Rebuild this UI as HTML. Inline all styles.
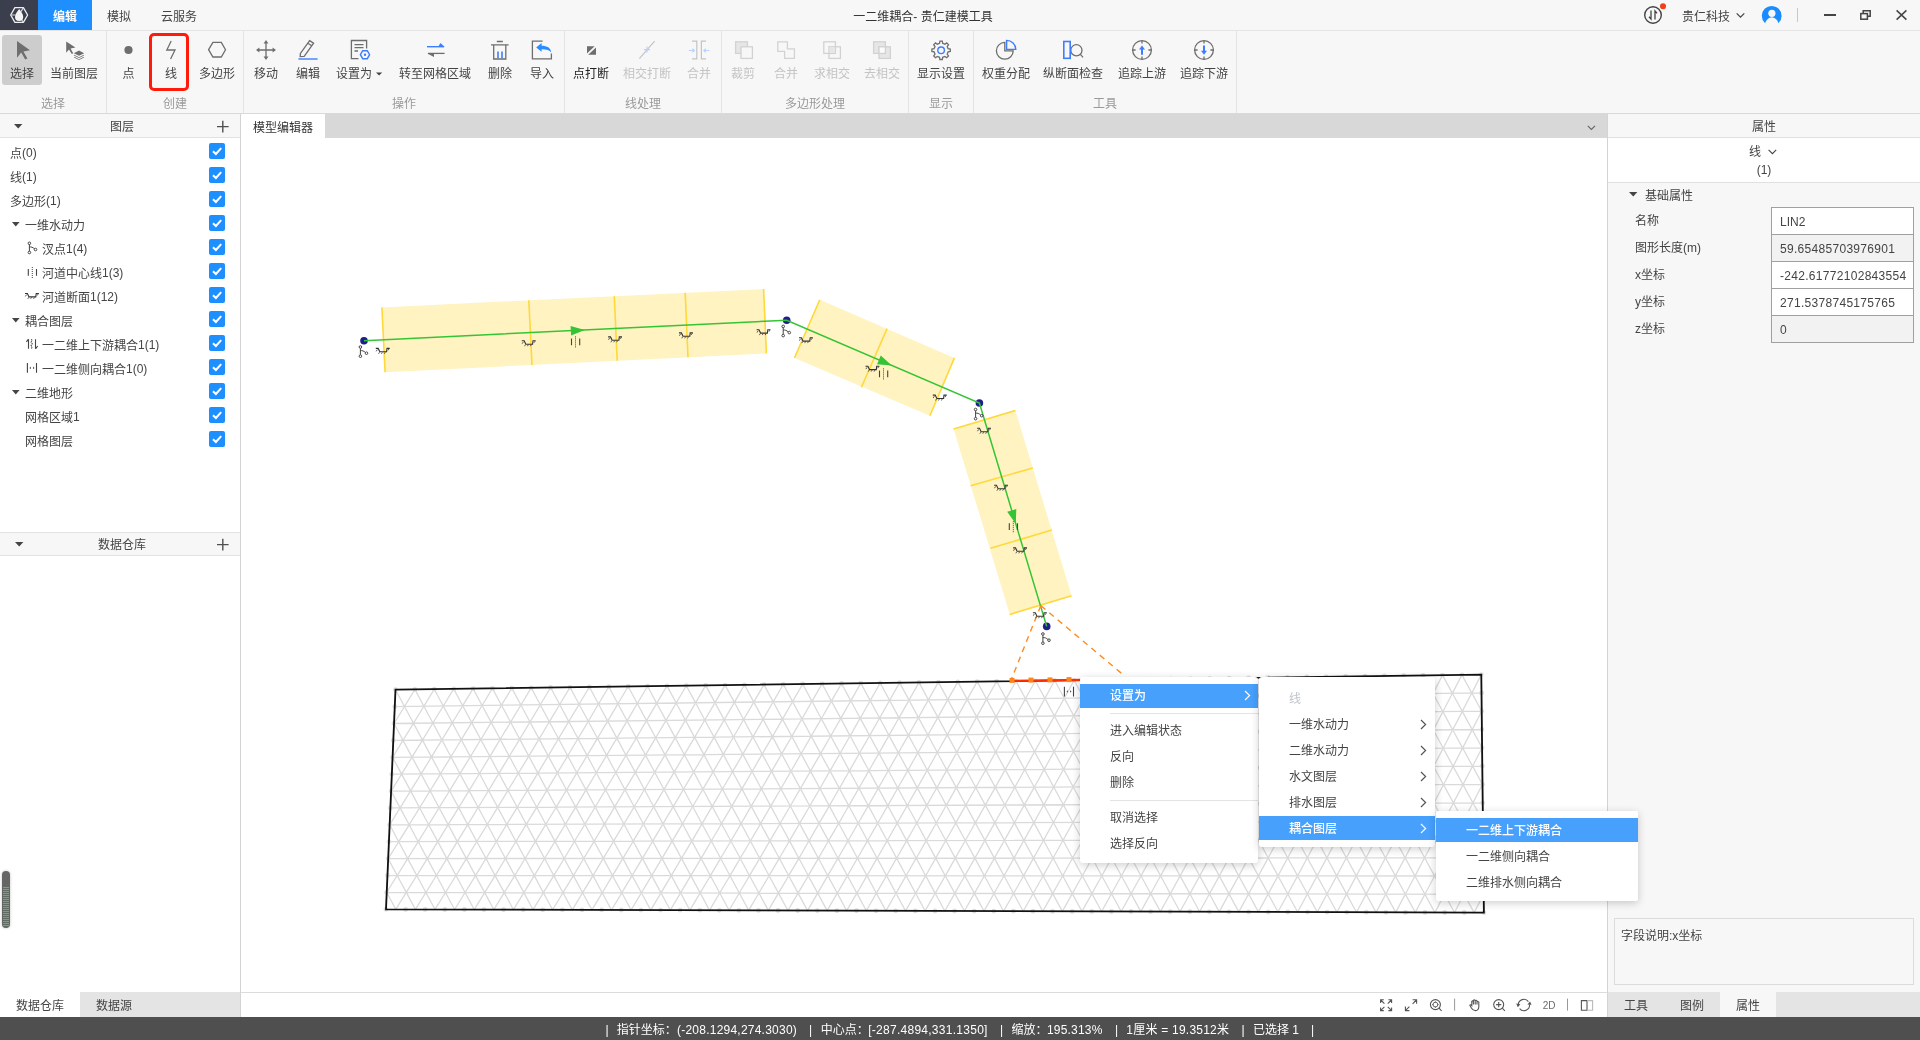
<!DOCTYPE html>
<html lang="zh-CN">
<head>
<meta charset="utf-8">
<title>一二维耦合- 贵仁建模工具</title>
<style>
*{box-sizing:border-box;margin:0;padding:0}
html,body{width:1920px;height:1040px;overflow:hidden;background:#fff}
body{font-family:"Liberation Sans","Noto Sans CJK SC",sans-serif;font-size:12px;color:#444;position:relative;line-height:1}
.abs{position:absolute}
.t{position:absolute;white-space:nowrap;line-height:16px;height:16px}
.c{transform:translateX(-50%)}
#top{position:absolute;left:0;top:0;width:1920px;height:30px;background:#f7f7f7}
#ribbon{position:absolute;left:0;top:30px;width:1920px;height:84px;background:#f7f7f7;border-top:1px solid #e2e2e2;border-bottom:1px solid #d9d9d9}
.sep{position:absolute;top:1px;width:1px;height:82px;background:#e4e4e4}
.gl{position:absolute;top:66.4px;color:#9a9a9a;white-space:nowrap;transform:translateX(-50%);line-height:16px}
.bl{position:absolute;top:36px;white-space:nowrap;transform:translateX(-50%);line-height:16px;color:#444}
.bl.dis{color:#c4c4c4}
.ic{position:absolute;overflow:visible}
svg{overflow:visible}
#left{position:absolute;left:0;top:114px;width:241px;height:903px;background:#fff;border-right:1px solid #d4d4d4}
.ph{position:absolute;left:0;width:240px;height:24px;background:#f7f7f7;border-bottom:1px solid #e2e2e2}
.row{position:absolute;left:0;width:240px;height:24px}
.row .t{top:6px}
.cb{position:absolute;left:209px;top:3px;width:16px;height:16px;background:#1e8fff;border-radius:2px}
#right{position:absolute;left:1607px;top:114px;width:313px;height:903px;background:#f7f7f7;border-left:1px solid #d4d4d4}
#status{position:absolute;left:0;top:1017px;width:1920px;height:23px;background:#4f4f4f;color:#fff}
.menu{position:absolute;background:#fff;box-shadow:0 2px 9px rgba(0,0,0,.2);border-radius:2px}
.mi{position:absolute;left:0;height:26px;line-height:26px;white-space:nowrap;color:#444}
.mi.sel{background:#46a0fc;color:#fff}
#wrap{position:absolute;left:0;top:0;width:1920px;height:1040px;will-change:transform}
.l{position:relative;top:-1px}
</style>
</head>
<body>
<div id="wrap">
<svg width="0" height="0" style="position:absolute">
  <defs>
    <g id="i-node" fill="none" stroke="#444" stroke-width="1">
      <circle cx="4.4" cy="1.3" r="1.3"/><circle cx="4.4" cy="10.5" r="1.3"/><circle cx="10.5" cy="7.5" r="1.3"/>
      <path d="M4.4 2.6 V9.2 M4.4 5 C6 4.6 8 5.4 9.4 6.8"/>
    </g>
    <g id="i-cl" fill="none" stroke="#444" stroke-width="1.1">
      <path d="M3.3 3 V9.8 M11.5 3 V9.8"/><path d="M7.3 1 V12" stroke-dasharray="1 1" stroke-width="1"/>
    </g>
    <g id="i-xs" fill="none" stroke="#333" stroke-width="1.1">
      <path d="M0 3.5 H2.4 L4 6.9 H10.8 L11.2 3.5 H13.9"/><path d="M1.5 4.6 L0.4 6.4 M3.6 7.4 L2.8 8.9 M6.5 7.4 L5.7 8.9 M9.4 7.4 L8.6 8.9 M13.2 3.9 L12.3 5.5" stroke-width=".8"/>
    </g>
    <g id="i-ud" fill="none" stroke="#444" stroke-width="1.1">
      <path d="M3.5 1.2 V10.8 M3.5 1.2 L1.4 3.8 M10.5 1.2 V10.8 M10.5 10.8 L12.7 8"/>
      <path d="M6.3 1.2 L7.2 2.6 L6.1 4.2 L7.2 5.8 L6.1 7.4 L7.2 9 L6.3 10.8" stroke-dasharray="1.6 .8"/>
    </g>
    <g id="i-lat" stroke="#444" stroke-width="1.1" fill="none">
      <path d="M2.4 1.1 V10.8 M11.5 1.1 V10.8"/><path d="M4.4 5.9 L5.9 4.6 V7.2 Z M9.5 5.9 L8 4.6 V7.2 Z" fill="#555" stroke="none"/>
    </g>
  </defs>
</svg>
<div id="top">
  <div class="abs" style="left:0;top:0;width:38px;height:30px;background:#3b3e4d">
    <svg class="abs" style="left:0;top:0" width="38" height="30" viewBox="0 0 38 30">
      <path d="M10.7 15 L14.9 7.6 H23.4 L27.6 15 L23.4 22.4 H14.9 Z" fill="none" stroke="#efefef" stroke-width="1.3" stroke-linejoin="round"/>
      <path d="M10.7 15 H15.4 M23.4 7.6 L21 11.6 M23.4 22.4 L21.4 19.4" stroke="#d8d8dc" stroke-width="1.1" fill="none"/>
      <path d="M19.2 9 C20.8 11.4 23.2 13.9 23.2 16.9 A4.1 4.1 0 0 1 15 16.9 C15 13.9 17.6 11.4 19.2 9 Z" fill="#f4f4f4"/>
    </svg>
  </div>
  <div class="abs" style="left:38px;top:0;width:54px;height:30px;background:#1e8fff"></div>
  <div class="t c" style="left:65px;top:8.6px;color:#fff;font-weight:bold">编辑</div>
  <div class="t c" style="left:119px;top:8.6px">模拟</div>
  <div class="t c" style="left:179px;top:8.6px">云服务</div>
  <div class="t c" style="left:923px;top:8.6px;color:#333">一二维耦合- 贵仁建模工具</div>
  <svg class="abs" style="left:1642px;top:0" width="30" height="30" viewBox="0 0 30 30">
    <circle cx="11" cy="15" r="8.3" fill="none" stroke="#444" stroke-width="1.4"/>
    <path d="M9 10.5 V19 L7 16.8 M13 19.5 V11 L15 13.2" fill="none" stroke="#444" stroke-width="1.3"/>
    <circle cx="21" cy="6.3" r="3" fill="#f0401a"/>
  </svg>
  <div class="t" style="left:1682px;top:8.6px;color:#444">贵仁科技</div>
  <svg class="abs" style="left:1736px;top:12px" width="9" height="7" viewBox="0 0 9 7"><path d="M0.7 1.3 L4.5 5.2 L8.3 1.3" fill="none" stroke="#444" stroke-width="1.2"/></svg>
  <svg class="abs" style="left:1760px;top:4px" width="24" height="24" viewBox="1760 4 24 24">
    <defs><clipPath id="avc"><circle cx="1771.7" cy="15.8" r="9.9"/></clipPath></defs>
    <circle cx="1771.7" cy="15.8" r="9.9" fill="#1a8cff"/>
    <g clip-path="url(#avc)"><ellipse cx="1771.8" cy="27.6" rx="7.4" ry="10.4" fill="#f7f7f7"/></g>
    <circle cx="1771.9" cy="13.3" r="3.6" fill="#f7f7f7"/>
    <rect x="1760" y="23.2" width="24" height="5" fill="#f7f7f7"/>
  </svg>
  <div class="abs" style="left:1797px;top:8px;width:1px;height:14px;background:#c8c8c8"></div>
  <div class="abs" style="left:1824px;top:14px;width:12px;height:2px;background:#444"></div>
  <svg class="abs" style="left:1860px;top:10px" width="11" height="10" viewBox="0 0 11 10"><path d="M3.2 3.2 V0.8 H10.2 V6.2 H7.5" fill="none" stroke="#444" stroke-width="1.5"/><rect x="0.8" y="3.6" width="6.6" height="5.6" fill="none" stroke="#444" stroke-width="1.5"/></svg>
  <svg class="abs" style="left:1896px;top:10px" width="11" height="10" viewBox="0 0 11 10"><path d="M0.6 0.4 L10.4 9.6 M10.4 0.4 L0.6 9.6" fill="none" stroke="#444" stroke-width="1.5"/></svg>
</div>
<div id="ribbon" style="border:none">
  <div class="abs" style="left:0;top:0;width:1920px;height:1px;background:#e4e4e4"></div>
  <div class="abs" style="left:0;top:83px;width:1920px;height:1px;background:#d9d9d9"></div>
  <div class="sep" style="left:106px"></div><div class="sep" style="left:243px"></div><div class="sep" style="left:564px"></div>
  <div class="sep" style="left:721px"></div><div class="sep" style="left:908px"></div><div class="sep" style="left:973px"></div><div class="sep" style="left:1236px"></div>
  <div class="abs" style="left:2px;top:5px;width:40px;height:50px;background:#cdcdcd;border-radius:3px"></div>
  <div class="abs" style="left:149px;top:3px;width:40px;height:58px;border:3px solid #ff1a0a;border-radius:5px"></div>

  <div class="bl" style="left:22px">选择</div>
  <div class="bl" style="left:74px">当前图层</div>
  <div class="bl" style="left:128.5px">点</div>
  <div class="bl" style="left:171px">线</div>
  <div class="bl" style="left:217px">多边形</div>
  <div class="bl" style="left:266px">移动</div>
  <div class="bl" style="left:308px">编辑</div>
  <div class="bl" style="left:354px">设置为</div>
  <div class="bl" style="left:435px">转至网格区域</div>
  <div class="bl" style="left:500px">删除</div>
  <div class="bl" style="left:542px">导入</div>
  <div class="bl" style="left:591px;color:#222">点打断</div>
  <div class="bl dis" style="left:647px">相交打断</div>
  <div class="bl dis" style="left:699px">合并</div>
  <div class="bl dis" style="left:743px">裁剪</div>
  <div class="bl dis" style="left:786px">合并</div>
  <div class="bl dis" style="left:832px">求相交</div>
  <div class="bl dis" style="left:882px">去相交</div>
  <div class="bl" style="left:941px">显示设置</div>
  <div class="bl" style="left:1006px">权重分配</div>
  <div class="bl" style="left:1073px">纵断面检查</div>
  <div class="bl" style="left:1142px">追踪上游</div>
  <div class="bl" style="left:1204px">追踪下游</div>

  <div class="gl" style="left:53px">选择</div>
  <div class="gl" style="left:175px">创建</div>
  <div class="gl" style="left:404px">操作</div>
  <div class="gl" style="left:643px">线处理</div>
  <div class="gl" style="left:815px">多边形处理</div>
  <div class="gl" style="left:941px">显示</div>
  <div class="gl" style="left:1105px">工具</div>

  <svg class="abs" style="left:0;top:0" width="1920" height="84" viewBox="0 30 1920 84">
    <g fill="#6e6e6e" stroke="none">
      <!-- select arrow -->
      <path d="M17 41 L17 57.8 L21.2 52.6 L25.2 59.6 L27.4 58.4 L23.4 51.4 L30 50.2 Z"/>
      <!-- current layer arrow -->
      <path d="M66.2 41.4 L66.2 52.8 L69 49.5 L71.8 54 L73.2 53.2 L70.6 48.6 L75.4 47.6 Z"/>
      <path d="M79 50.6 L84.2 53.2 L79 55.8 L73.8 53.2 Z"/>
      <path d="M74.6 55 L79 57.2 L83.4 55 L84.2 55.5 L79 58.1 L73.8 55.5 Z"/>
      <path d="M74.6 57 L79 59.2 L83.4 57 L84.2 57.5 L79 60.1 L73.8 57.5 Z"/>
      <!-- point -->
      <circle cx="128.5" cy="50" r="4.1"/>
      <!-- break at point -->
      <path d="M587 46.2 H594.6 L587 53.4 Z M596 47.4 V54.8 H588.2 Z"/>
    </g>
    <g fill="none" stroke="#6e6e6e" stroke-width="1.3">
      <!-- line -->
      <path d="M171.2 41 L166.8 50 H175 L170.6 59"/>
      <!-- polygon -->
      <path d="M208.6 49.7 L212.9 42.4 H221.3 L225.5 49.7 L221.3 57 H212.9 Z"/>
      <!-- move -->
      <path d="M266 42 V58 M258 50 H274"/>
      <!-- pencil -->
      <path d="M309.6 40.6 L313.6 43.2 L304.2 56.4 L300.2 56.6 L300.4 53.4 Z M307.8 43.2 L311.8 45.8"/>
      <!-- doc -->
      <path d="M358.5 58.6 H351.4 V40.5 H366.6 V48.5"/>
      <path d="M354.5 44.6 H363.5 M354.5 47.6 H363.5 M354.5 51 H358"/>
      <!-- swap gray -->
      <path d="M444.6 53.4 H428"/>
      <!-- trash -->
      <path d="M496.8 41.5 H502.8 M491 44.8 H508.6 M493.7 45 V59 H505.8 V45"/>
      <!-- import -->
      <path d="M542.6 41.2 H532.4 V58.8 H551.4 V53.6"/>
      <!-- gear -->
      <path d="M939.9 41.1 L942.3 41.1 L942.7 43.3 L944.9 44.2 L946.7 42.9 L948.5 44.7 L947.2 46.5 L948.1 48.7 L950.3 49.1 L950.3 51.5 L948.1 51.9 L947.2 54.1 L948.5 55.9 L946.7 57.7 L944.9 56.4 L942.7 57.3 L942.3 59.5 L939.9 59.5 L939.5 57.3 L937.3 56.4 L935.5 57.7 L933.7 55.9 L935.0 54.1 L934.1 51.9 L931.9 51.5 L931.9 49.1 L934.1 48.7 L935.0 46.5 L933.7 44.7 L935.5 42.9 L937.3 44.2 L939.5 43.3 Z"/>
      <!-- pie gray -->
      <path d="M1004.8 42.4 A8.4 8.4 0 1 0 1013.2 50.8 H1004.8 Z"/>
      <!-- magnifier -->
      <circle cx="1076.4" cy="50.3" r="5.6"/><path d="M1080.4 54.4 L1083 57.4"/>
      <!-- trace circles -->
      <circle cx="1142" cy="50" r="9.4"/><path d="M1142 40.6 V43.6 M1142 56.4 V59.4 M1132.6 50 H1135.6 M1148.4 50 H1151.4"/>
      <circle cx="1204" cy="50" r="9.4"/><path d="M1204 40.6 V43.6 M1204 56.4 V59.4 M1194.6 50 H1197.6 M1210.4 50 H1213.4"/>
    </g>
    <g fill="#6e6e6e">
      <path d="M266 40 L268.4 43.4 H263.6 Z M266 60 L268.4 56.6 H263.6 Z M256 50 L259.4 47.6 V52.4 Z M276 50 L272.6 47.6 V52.4 Z"/>
      <path d="M427.2 53.4 H434 V57 Z"/>
      <path d="M376 72.4 H382.2 L379.1 75.6 Z" fill="#444"/>
    </g>
    <g fill="none" stroke="#3d7eff" stroke-width="1.4">
      <path d="M298.4 59 H317.6"/>
      <path d="M360.4 54.7 L362.7 50.7 H367.3 L369.6 54.7 L367.3 58.7 H362.7 Z"/>
      <path d="M427 46.7 H444"/>
      <path d="M498 51.4 V58.2 M502 51.4 V58.2" stroke-width="1.6"/>
      <circle cx="941.1" cy="50.3" r="3.3"/>
      <path d="M1006.6 40.4 A9.2 9.2 0 0 1 1015.8 49.4 H1006.6 Z"/>
      <rect x="1063.8" y="41.5" width="6.4" height="16.8" stroke-width="1.6"/>
    </g>
    <g fill="#3d7eff">
      <circle cx="365" cy="54.7" r="1.2"/>
      <path d="M444.8 46.9 H438 L440.4 43 Z"/>
      <path d="M536.2 47.4 L541.6 43 V45.8 C547 45.8 550.8 47.8 551.2 52.4 C549.6 50 546.6 49.2 541.6 49.2 V51.8 Z" fill="#2b8cff"/>
      <path d="M1142 45.6 L1145 49.6 H1143 V54.8 H1141 V49.6 H1139 Z"/>
      <path d="M1204 54.8 L1207 50.8 H1205 V45.6 H1203 V50.8 H1201 Z"/>
    </g>
    <!-- disabled -->
    <g fill="none" stroke="#c4c4c4" stroke-width="1.2">
      <path d="M639.4 58.6 L654.6 41.2"/>
      <path d="M692 41.2 H696.8 V58.8 H692 M706 41.2 H701.4 V58.8 H706"/>
    </g>
    <g fill="none" stroke="#b9d1ff" stroke-width="1.2">
      <path d="M644 49.6 H650 M647 46.6 V52.6"/>
      <path d="M688.8 50.5 H694.4 M692.4 48.6 L694.4 50.5 L692.4 52.4"/>
      <path d="M709.4 50.5 H703.8 M705.8 48.6 L703.8 50.5 L705.8 52.4"/>
    </g>
    <g stroke="#d2d2d2" stroke-width="1.3">
      <rect x="735.6" y="41.8" width="11.8" height="11.6" fill="#e6e6e6"/>
      <rect x="741" y="46.8" width="11.4" height="11.6" fill="#f7f7f7"/>
      <path d="M777.8 41.8 H787.4 V48.8 H794.4 V58.4 H784.6 V51.4 H777.8 Z" fill="#f7f7f7"/>
      <rect x="823.8" y="41.8" width="11.6" height="11.6" fill="none"/>
      <rect x="829" y="46.8" width="11.4" height="11.6" fill="none"/>
      <rect x="829.6" y="47.4" width="5.2" height="5.4" fill="#e6e6e6" stroke="none"/>
      <rect x="873.6" y="41.8" width="11.8" height="11.6" fill="#e6e6e6"/>
      <rect x="879" y="46.8" width="11.4" height="11.6" fill="#e6e6e6"/>
      <rect x="879" y="46.8" width="6.4" height="6.6" fill="#fbfbfb"/>
    </g>
  </svg>
</div>
<div id="left">
<div class="ph" style="top:0"><svg class="abs" style="left:14px;top:10px" width="9" height="5"><path d="M0 0 H8.4 L4.2 4.6 Z" fill="#444"/></svg><div class="t c" style="left:122px;top:5px">图层</div><svg class="abs" style="left:216px;top:6px" width="13" height="13"><path d="M6.8 0.8 V12.4 M1 6.6 H12.6" stroke="#505050" stroke-width="1.4" fill="none"/></svg></div>
<div class="row" style="top:26px"><div class="t" style="left:10px">点<span class="l">(0)</span></div><div class="cb"><svg width="16" height="16" viewBox="0 0 16 16"><path d="M4 8.2 L6.9 11 L12.2 5.2" fill="none" stroke="#fff" stroke-width="2"/></svg></div></div>
<div class="row" style="top:50px"><div class="t" style="left:10px">线<span class="l">(1)</span></div><div class="cb"><svg width="16" height="16" viewBox="0 0 16 16"><path d="M4 8.2 L6.9 11 L12.2 5.2" fill="none" stroke="#fff" stroke-width="2"/></svg></div></div>
<div class="row" style="top:74px"><div class="t" style="left:10px">多边形<span class="l">(1)</span></div><div class="cb"><svg width="16" height="16" viewBox="0 0 16 16"><path d="M4 8.2 L6.9 11 L12.2 5.2" fill="none" stroke="#fff" stroke-width="2"/></svg></div></div>
<div class="row" style="top:98px"><svg class="abs" style="left:12px;top:10px" width="8" height="5"><path d="M0 0 H7.6 L3.8 4.4 Z" fill="#444"/></svg><div class="t" style="left:25px">一维水动力</div><div class="cb"><svg width="16" height="16" viewBox="0 0 16 16"><path d="M4 8.2 L6.9 11 L12.2 5.2" fill="none" stroke="#fff" stroke-width="2"/></svg></div></div>
<div class="row" style="top:122px"><svg class="abs" style="left:25px;top:6px" width="14" height="14" viewBox="0 0 14 14"><use href="#i-node"/></svg><div class="t" style="left:42px">汊点<span class="l">1(4)</span></div><div class="cb"><svg width="16" height="16" viewBox="0 0 16 16"><path d="M4 8.2 L6.9 11 L12.2 5.2" fill="none" stroke="#fff" stroke-width="2"/></svg></div></div>
<div class="row" style="top:146px"><svg class="abs" style="left:25px;top:6px" width="14" height="14" viewBox="0 0 14 14"><use href="#i-cl"/></svg><div class="t" style="left:42px">河道中心线<span class="l">1(3)</span></div><div class="cb"><svg width="16" height="16" viewBox="0 0 16 16"><path d="M4 8.2 L6.9 11 L12.2 5.2" fill="none" stroke="#fff" stroke-width="2"/></svg></div></div>
<div class="row" style="top:170px"><svg class="abs" style="left:25px;top:6px" width="14" height="14" viewBox="0 0 14 14"><use href="#i-xs"/></svg><div class="t" style="left:42px">河道断面<span class="l">1(12)</span></div><div class="cb"><svg width="16" height="16" viewBox="0 0 16 16"><path d="M4 8.2 L6.9 11 L12.2 5.2" fill="none" stroke="#fff" stroke-width="2"/></svg></div></div>
<div class="row" style="top:194px"><svg class="abs" style="left:12px;top:10px" width="8" height="5"><path d="M0 0 H7.6 L3.8 4.4 Z" fill="#444"/></svg><div class="t" style="left:25px">耦合图层</div><div class="cb"><svg width="16" height="16" viewBox="0 0 16 16"><path d="M4 8.2 L6.9 11 L12.2 5.2" fill="none" stroke="#fff" stroke-width="2"/></svg></div></div>
<div class="row" style="top:218px"><svg class="abs" style="left:25px;top:6px" width="14" height="14" viewBox="0 0 14 14"><use href="#i-ud"/></svg><div class="t" style="left:42px">一二维上下游耦合<span class="l">1(1)</span></div><div class="cb"><svg width="16" height="16" viewBox="0 0 16 16"><path d="M4 8.2 L6.9 11 L12.2 5.2" fill="none" stroke="#fff" stroke-width="2"/></svg></div></div>
<div class="row" style="top:242px"><svg class="abs" style="left:25px;top:6px" width="14" height="14" viewBox="0 0 14 14"><use href="#i-lat"/></svg><div class="t" style="left:42px">一二维侧向耦合<span class="l">1(0)</span></div><div class="cb"><svg width="16" height="16" viewBox="0 0 16 16"><path d="M4 8.2 L6.9 11 L12.2 5.2" fill="none" stroke="#fff" stroke-width="2"/></svg></div></div>
<div class="row" style="top:266px"><svg class="abs" style="left:12px;top:10px" width="8" height="5"><path d="M0 0 H7.6 L3.8 4.4 Z" fill="#444"/></svg><div class="t" style="left:25px">二维地形</div><div class="cb"><svg width="16" height="16" viewBox="0 0 16 16"><path d="M4 8.2 L6.9 11 L12.2 5.2" fill="none" stroke="#fff" stroke-width="2"/></svg></div></div>
<div class="row" style="top:290px"><div class="t" style="left:25px">网格区域<span class="l">1</span></div><div class="cb"><svg width="16" height="16" viewBox="0 0 16 16"><path d="M4 8.2 L6.9 11 L12.2 5.2" fill="none" stroke="#fff" stroke-width="2"/></svg></div></div>
<div class="row" style="top:314px"><div class="t" style="left:25px">网格图层</div><div class="cb"><svg width="16" height="16" viewBox="0 0 16 16"><path d="M4 8.2 L6.9 11 L12.2 5.2" fill="none" stroke="#fff" stroke-width="2"/></svg></div></div>
<div class="abs" style="left:0;top:418px;width:240px;height:1px;background:#e2e2e2"></div>
<div class="ph" style="top:419px;height:23px"><svg class="abs" style="left:14.8px;top:9px" width="9" height="5"><path d="M0 0 H8.4 L4.2 4.6 Z" fill="#444"/></svg><div class="t c" style="left:122px;top:4px">数据仓库</div><svg class="abs" style="left:216px;top:5px" width="13" height="13"><path d="M6.8 0.8 V12.4 M1 6.6 H12.6" stroke="#505050" stroke-width="1.4" fill="none"/></svg></div>
<div class="abs" style="left:2px;top:757px;width:8px;height:57px;border-radius:4px;background:#656565;overflow:hidden;box-shadow:0 0 3px rgba(0,0,0,.25)"><div class="abs" style="left:1px;top:16px;width:6px;height:40px;background:repeating-linear-gradient(#20d268 0,#20d268 1px,#5f6a62 1px,#5f6a62 2px)"></div></div>
<div class="abs" style="left:80px;top:878px;width:160px;height:25px;background:#e4e4e4"></div>
<div class="t c" style="left:40px;top:884px">数据仓库</div><div class="t c" style="left:114px;top:884px">数据源</div>
</div>
<div class="abs" style="left:241px;top:114px;width:1366px;height:24px;background:#d8d8d8"></div>
<div class="abs" style="left:241px;top:114px;width:84px;height:24px;background:#fff"></div>
<div class="t c" style="left:283px;top:119.6px;color:#333">模型编辑器</div>
<svg class="abs" style="left:1586.5px;top:125px" width="9" height="6" viewBox="0 0 9 6"><path d="M0.8 0.8 L4.4 4.4 L8 0.8" fill="none" stroke="#666" stroke-width="1.2"/></svg>
<svg class="abs" style="left:241px;top:138px" width="1366" height="854" viewBox="241 138 1366 854">
<path d="M394.8 706.6 L1481.5 692.9 M394.0 723.5 L1481.7 711.2 M393.3 740.4 L1481.9 729.5 M392.6 757.3 L1482.1 747.8 M391.8 774.2 L1482.3 766.1 M391.1 791.1 L1482.5 784.4 M390.4 807.9 L1482.7 802.8 M389.7 824.8 L1482.9 821.1 M388.9 841.7 L1483.1 839.4 M388.2 858.6 L1483.3 857.7 M387.5 875.5 L1483.5 876.0 M386.7 892.4 L1483.7 894.3 M394.8 706.6 L395.5 689.7 L404.5 706.5 L414.9 689.4 L423.9 706.2 L434.3 689.2 L443.3 706.0 L453.7 688.9 L462.7 705.7 L473.1 688.6 L482.1 705.5 L492.4 688.4 L501.5 705.2 L511.8 688.1 L520.9 705.0 L531.2 687.8 L540.3 704.8 L550.6 687.5 L559.7 704.5 L570.0 687.3 L579.1 704.3 L589.4 687.0 L598.5 704.0 L608.8 686.7 L617.9 703.8 L628.2 686.5 L637.3 703.5 L647.6 686.2 L656.7 703.3 L667.0 685.9 L676.2 703.0 L686.3 685.7 L695.6 702.8 L705.7 685.4 L715.0 702.6 L725.1 685.1 L734.4 702.3 L744.5 684.8 L753.8 702.1 L763.9 684.6 L773.2 701.8 L783.3 684.3 L792.6 701.6 L802.7 684.0 L812.0 701.3 L822.1 683.8 L831.4 701.1 L841.5 683.5 L850.8 700.8 L860.8 683.2 L870.2 700.6 L880.2 683.0 L889.6 700.4 L899.6 682.7 L909.0 700.1 L919.0 682.4 L928.4 699.9 L938.4 682.2 L947.8 699.6 L957.8 681.9 L967.2 699.4 L977.2 681.6 L986.6 699.1 L996.6 681.3 L1006.1 698.9 L1016.0 681.1 L1025.5 698.7 L1035.3 680.8 L1044.9 698.4 L1054.7 680.5 L1064.3 698.2 L1074.1 680.3 L1083.7 697.9 L1093.5 680.0 L1103.1 697.7 L1112.9 679.7 L1122.5 697.4 L1132.3 679.5 L1141.9 697.2 L1151.7 679.2 L1161.3 696.9 L1171.1 678.9 L1180.7 696.7 L1190.5 678.6 L1200.1 696.5 L1209.8 678.4 L1219.5 696.2 L1229.2 678.1 L1238.9 696.0 L1248.6 677.8 L1258.3 695.7 L1268.0 677.6 L1277.7 695.5 L1287.4 677.3 L1297.1 695.2 L1306.8 677.0 L1316.5 695.0 L1326.2 676.8 L1336.0 694.7 L1345.6 676.5 L1355.4 694.5 L1365.0 676.2 L1374.8 694.3 L1384.4 675.9 L1394.2 694.0 L1403.7 675.7 L1413.6 693.8 L1423.1 675.4 L1433.0 693.5 L1442.5 675.1 L1452.4 693.3 L1461.9 674.9 L1471.8 693.0 L1481.3 674.6 L1481.5 692.9 M394.8 706.6 L394.0 723.5 L404.5 706.5 L413.5 723.3 L423.9 706.2 L432.9 723.0 L443.3 706.0 L452.3 722.8 L462.7 705.7 L471.7 722.6 L482.1 705.5 L491.2 722.4 L501.5 705.2 L510.6 722.2 L520.9 705.0 L530.0 722.0 L540.3 704.8 L549.4 721.7 L559.7 704.5 L568.8 721.5 L579.1 704.3 L588.3 721.3 L598.5 704.0 L607.7 721.1 L617.9 703.8 L627.1 720.9 L637.3 703.5 L646.5 720.6 L656.7 703.3 L666.0 720.4 L676.2 703.0 L685.4 720.2 L695.6 702.8 L704.8 720.0 L715.0 702.6 L724.2 719.8 L734.4 702.3 L743.6 719.5 L753.8 702.1 L763.1 719.3 L773.2 701.8 L782.5 719.1 L792.6 701.6 L801.9 718.9 L812.0 701.3 L821.3 718.7 L831.4 701.1 L840.8 718.4 L850.8 700.8 L860.2 718.2 L870.2 700.6 L879.6 718.0 L889.6 700.4 L899.0 717.8 L909.0 700.1 L918.4 717.6 L928.4 699.9 L937.9 717.4 L947.8 699.6 L957.3 717.1 L967.2 699.4 L976.7 716.9 L986.6 699.1 L996.1 716.7 L1006.1 698.9 L1015.6 716.5 L1025.5 698.7 L1035.0 716.3 L1044.9 698.4 L1054.4 716.0 L1064.3 698.2 L1073.8 715.8 L1083.7 697.9 L1093.2 715.6 L1103.1 697.7 L1112.7 715.4 L1122.5 697.4 L1132.1 715.2 L1141.9 697.2 L1151.5 714.9 L1161.3 696.9 L1170.9 714.7 L1180.7 696.7 L1190.4 714.5 L1200.1 696.5 L1209.8 714.3 L1219.5 696.2 L1229.2 714.1 L1238.9 696.0 L1248.6 713.8 L1258.3 695.7 L1268.1 713.6 L1277.7 695.5 L1287.5 713.4 L1297.1 695.2 L1306.9 713.2 L1316.5 695.0 L1326.3 713.0 L1336.0 694.7 L1345.7 712.7 L1355.4 694.5 L1365.2 712.5 L1374.8 694.3 L1384.6 712.3 L1394.2 694.0 L1404.0 712.1 L1413.6 693.8 L1423.4 711.9 L1433.0 693.5 L1442.9 711.7 L1452.4 693.3 L1462.3 711.4 L1471.8 693.0 L1481.7 711.2 L1481.5 692.9 M393.3 740.4 L394.0 723.5 L403.0 740.3 L413.5 723.3 L422.5 740.1 L432.9 723.0 L441.9 739.9 L452.3 722.8 L461.3 739.7 L471.7 722.6 L480.8 739.5 L491.2 722.4 L500.2 739.3 L510.6 722.2 L519.7 739.1 L530.0 722.0 L539.1 738.9 L549.4 721.7 L558.5 738.7 L568.8 721.5 L578.0 738.5 L588.3 721.3 L597.4 738.3 L607.7 721.1 L616.9 738.1 L627.1 720.9 L636.3 738.0 L646.5 720.6 L655.7 737.8 L666.0 720.4 L675.2 737.6 L685.4 720.2 L694.6 737.4 L704.8 720.0 L714.1 737.2 L724.2 719.8 L733.5 737.0 L743.6 719.5 L752.9 736.8 L763.1 719.3 L772.4 736.6 L782.5 719.1 L791.8 736.4 L801.9 718.9 L811.2 736.2 L821.3 718.7 L830.7 736.0 L840.8 718.4 L850.1 735.8 L860.2 718.2 L869.6 735.6 L879.6 718.0 L889.0 735.4 L899.0 717.8 L908.4 735.2 L918.4 717.6 L927.9 735.0 L937.9 717.4 L947.3 734.9 L957.3 717.1 L966.8 734.7 L976.7 716.9 L986.2 734.5 L996.1 716.7 L1005.6 734.3 L1015.6 716.5 L1025.1 734.1 L1035.0 716.3 L1044.5 733.9 L1054.4 716.0 L1064.0 733.7 L1073.8 715.8 L1083.4 733.5 L1093.2 715.6 L1102.8 733.3 L1112.7 715.4 L1122.3 733.1 L1132.1 715.2 L1141.7 732.9 L1151.5 714.9 L1161.2 732.7 L1170.9 714.7 L1180.6 732.5 L1190.4 714.5 L1200.0 732.3 L1209.8 714.3 L1219.5 732.1 L1229.2 714.1 L1238.9 731.9 L1248.6 713.8 L1258.3 731.8 L1268.1 713.6 L1277.8 731.6 L1287.5 713.4 L1297.2 731.4 L1306.9 713.2 L1316.7 731.2 L1326.3 713.0 L1336.1 731.0 L1345.7 712.7 L1355.5 730.8 L1365.2 712.5 L1375.0 730.6 L1384.6 712.3 L1394.4 730.4 L1404.0 712.1 L1413.9 730.2 L1423.4 711.9 L1433.3 730.0 L1442.9 711.7 L1452.7 729.8 L1462.3 711.4 L1472.2 729.6 L1481.7 711.2 L1481.9 729.5 M393.3 740.4 L392.6 757.3 L403.0 740.3 L412.0 757.1 L422.5 740.1 L431.5 756.9 L441.9 739.9 L450.9 756.8 L461.3 739.7 L470.4 756.6 L480.8 739.5 L489.9 756.4 L500.2 739.3 L509.3 756.3 L519.7 739.1 L528.8 756.1 L539.1 738.9 L548.2 755.9 L558.5 738.7 L567.7 755.8 L578.0 738.5 L587.1 755.6 L597.4 738.3 L606.6 755.4 L616.9 738.1 L626.0 755.2 L636.3 738.0 L645.5 755.1 L655.7 737.8 L665.0 754.9 L675.2 737.6 L684.4 754.7 L694.6 737.4 L703.9 754.6 L714.1 737.2 L723.3 754.4 L733.5 737.0 L742.8 754.2 L752.9 736.8 L762.2 754.1 L772.4 736.6 L781.7 753.9 L791.8 736.4 L801.1 753.7 L811.2 736.2 L820.6 753.6 L830.7 736.0 L840.1 753.4 L850.1 735.8 L859.5 753.2 L869.6 735.6 L879.0 753.1 L889.0 735.4 L898.4 752.9 L908.4 735.2 L917.9 752.7 L927.9 735.0 L937.3 752.5 L947.3 734.9 L956.8 752.4 L966.8 734.7 L976.2 752.2 L986.2 734.5 L995.7 752.0 L1005.6 734.3 L1015.2 751.9 L1025.1 734.1 L1034.6 751.7 L1044.5 733.9 L1054.1 751.5 L1064.0 733.7 L1073.5 751.4 L1083.4 733.5 L1093.0 751.2 L1102.8 733.3 L1112.4 751.0 L1122.3 733.1 L1131.9 750.9 L1141.7 732.9 L1151.4 750.7 L1161.2 732.7 L1170.8 750.5 L1180.6 732.5 L1190.3 750.4 L1200.0 732.3 L1209.7 750.2 L1219.5 732.1 L1229.2 750.0 L1238.9 731.9 L1248.6 749.9 L1258.3 731.8 L1268.1 749.7 L1277.8 731.6 L1287.5 749.5 L1297.2 731.4 L1307.0 749.3 L1316.7 731.2 L1326.5 749.2 L1336.1 731.0 L1345.9 749.0 L1355.5 730.8 L1365.4 748.8 L1375.0 730.6 L1384.8 748.7 L1394.4 730.4 L1404.3 748.5 L1413.9 730.2 L1423.7 748.3 L1433.3 730.0 L1443.2 748.2 L1452.7 729.8 L1462.6 748.0 L1472.2 729.6 L1482.1 747.8 L1481.9 729.5 M391.8 774.2 L392.6 757.3 L401.6 774.1 L412.0 757.1 L421.1 773.9 L431.5 756.9 L440.5 773.8 L450.9 756.8 L460.0 773.7 L470.4 756.6 L479.5 773.5 L489.9 756.4 L498.9 773.4 L509.3 756.3 L518.4 773.2 L528.8 756.1 L537.9 773.1 L548.2 755.9 L557.4 772.9 L567.7 755.8 L576.8 772.8 L587.1 755.6 L596.3 772.7 L606.6 755.4 L615.8 772.5 L626.0 755.2 L635.3 772.4 L645.5 755.1 L654.7 772.2 L665.0 754.9 L674.2 772.1 L684.4 754.7 L693.7 771.9 L703.9 754.6 L713.1 771.8 L723.3 754.4 L732.6 771.7 L742.8 754.2 L752.1 771.5 L762.2 754.1 L771.6 771.4 L781.7 753.9 L791.0 771.2 L801.1 753.7 L810.5 771.1 L820.6 753.6 L830.0 770.9 L840.1 753.4 L849.4 770.8 L859.5 753.2 L868.9 770.7 L879.0 753.1 L888.4 770.5 L898.4 752.9 L907.9 770.4 L917.9 752.7 L927.3 770.2 L937.3 752.5 L946.8 770.1 L956.8 752.4 L966.3 769.9 L976.2 752.2 L985.8 769.8 L995.7 752.0 L1005.2 769.6 L1015.2 751.9 L1024.7 769.5 L1034.6 751.7 L1044.2 769.4 L1054.1 751.5 L1063.6 769.2 L1073.5 751.4 L1083.1 769.1 L1093.0 751.2 L1102.6 768.9 L1112.4 751.0 L1122.1 768.8 L1131.9 750.9 L1141.5 768.6 L1151.4 750.7 L1161.0 768.5 L1170.8 750.5 L1180.5 768.4 L1190.3 750.4 L1200.0 768.2 L1209.7 750.2 L1219.4 768.1 L1229.2 750.0 L1238.9 767.9 L1248.6 749.9 L1258.4 767.8 L1268.1 749.7 L1277.8 767.6 L1287.5 749.5 L1297.3 767.5 L1307.0 749.3 L1316.8 767.4 L1326.5 749.2 L1336.3 767.2 L1345.9 749.0 L1355.7 767.1 L1365.4 748.8 L1375.2 766.9 L1384.8 748.7 L1394.7 766.8 L1404.3 748.5 L1414.1 766.6 L1423.7 748.3 L1433.6 766.5 L1443.2 748.2 L1453.1 766.4 L1462.6 748.0 L1472.6 766.2 L1482.1 747.8 L1482.3 766.1 M391.8 774.2 L391.1 791.1 L401.6 774.1 L410.6 790.9 L421.1 773.9 L430.1 790.8 L440.5 773.8 L449.6 790.7 L460.0 773.7 L469.1 790.6 L479.5 773.5 L488.6 790.5 L498.9 773.4 L508.0 790.3 L518.4 773.2 L527.5 790.2 L537.9 773.1 L547.0 790.1 L557.4 772.9 L566.5 790.0 L576.8 772.8 L586.0 789.9 L596.3 772.7 L605.5 789.8 L615.8 772.5 L625.0 789.6 L635.3 772.4 L644.5 789.5 L654.7 772.2 L664.0 789.4 L674.2 772.1 L683.5 789.3 L693.7 771.9 L702.9 789.2 L713.1 771.8 L722.4 789.0 L732.6 771.7 L741.9 788.9 L752.1 771.5 L761.4 788.8 L771.6 771.4 L780.9 788.7 L791.0 771.2 L800.4 788.6 L810.5 771.1 L819.9 788.5 L830.0 770.9 L839.4 788.3 L849.4 770.8 L858.9 788.2 L868.9 770.7 L878.3 788.1 L888.4 770.5 L897.8 788.0 L907.9 770.4 L917.3 787.9 L927.3 770.2 L936.8 787.8 L946.8 770.1 L956.3 787.6 L966.3 769.9 L975.8 787.5 L985.8 769.8 L995.3 787.4 L1005.2 769.6 L1014.8 787.3 L1024.7 769.5 L1034.3 787.2 L1044.2 769.4 L1053.7 787.0 L1063.6 769.2 L1073.2 786.9 L1083.1 769.1 L1092.7 786.8 L1102.6 768.9 L1112.2 786.7 L1122.1 768.8 L1131.7 786.6 L1141.5 768.6 L1151.2 786.5 L1161.0 768.5 L1170.7 786.3 L1180.5 768.4 L1190.2 786.2 L1200.0 768.2 L1209.7 786.1 L1219.4 768.1 L1229.1 786.0 L1238.9 767.9 L1248.6 785.9 L1258.4 767.8 L1268.1 785.7 L1277.8 767.6 L1287.6 785.6 L1297.3 767.5 L1307.1 785.5 L1316.8 767.4 L1326.6 785.4 L1336.3 767.2 L1346.1 785.3 L1355.7 767.1 L1365.6 785.2 L1375.2 766.9 L1385.1 785.0 L1394.7 766.8 L1404.5 784.9 L1414.1 766.6 L1424.0 784.8 L1433.6 766.5 L1443.5 784.7 L1453.1 766.4 L1463.0 784.6 L1472.6 766.2 L1482.5 784.4 L1482.3 766.1 M390.4 807.9 L391.1 791.1 L400.1 807.9 L410.6 790.9 L419.6 807.8 L430.1 790.8 L439.1 807.7 L449.6 790.7 L458.7 807.6 L469.1 790.6 L478.2 807.5 L488.6 790.5 L497.7 807.4 L508.0 790.3 L517.2 807.3 L527.5 790.2 L536.7 807.3 L547.0 790.1 L556.2 807.2 L566.5 790.0 L575.7 807.1 L586.0 789.9 L595.2 807.0 L605.5 789.8 L614.7 806.9 L625.0 789.6 L634.2 806.8 L644.5 789.5 L653.7 806.7 L664.0 789.4 L673.2 806.6 L683.5 789.3 L692.7 806.5 L702.9 789.2 L712.2 806.4 L722.4 789.0 L731.7 806.3 L741.9 788.9 L751.2 806.2 L761.4 788.8 L770.7 806.1 L780.9 788.7 L790.3 806.0 L800.4 788.6 L809.8 806.0 L819.9 788.5 L829.3 805.9 L839.4 788.3 L848.8 805.8 L858.9 788.2 L868.3 805.7 L878.3 788.1 L887.8 805.6 L897.8 788.0 L907.3 805.5 L917.3 787.9 L926.8 805.4 L936.8 787.8 L946.3 805.3 L956.3 787.6 L965.8 805.2 L975.8 787.5 L985.3 805.1 L995.3 787.4 L1004.8 805.0 L1014.8 787.3 L1024.3 804.9 L1034.3 787.2 L1043.8 804.8 L1053.7 787.0 L1063.3 804.7 L1073.2 786.9 L1082.8 804.7 L1092.7 786.8 L1102.3 804.6 L1112.2 786.7 L1121.8 804.5 L1131.7 786.6 L1141.4 804.4 L1151.2 786.5 L1160.9 804.3 L1170.7 786.3 L1180.4 804.2 L1190.2 786.2 L1199.9 804.1 L1209.7 786.1 L1219.4 804.0 L1229.1 786.0 L1238.9 803.9 L1248.6 785.9 L1258.4 803.8 L1268.1 785.7 L1277.9 803.7 L1287.6 785.6 L1297.4 803.6 L1307.1 785.5 L1316.9 803.5 L1326.6 785.4 L1336.4 803.4 L1346.1 785.3 L1355.9 803.4 L1365.6 785.2 L1375.4 803.3 L1385.1 785.0 L1394.9 803.2 L1404.5 784.9 L1414.4 803.1 L1424.0 784.8 L1433.9 803.0 L1443.5 784.7 L1453.4 802.9 L1463.0 784.6 L1472.9 802.8 L1482.5 784.4 L1482.7 802.8 M390.4 807.9 L389.7 824.8 L400.1 807.9 L409.2 824.8 L419.6 807.8 L428.7 824.7 L439.1 807.7 L448.2 824.6 L458.7 807.6 L467.7 824.6 L478.2 807.5 L487.3 824.5 L497.7 807.4 L506.8 824.4 L517.2 807.3 L526.3 824.4 L536.7 807.3 L545.8 824.3 L556.2 807.2 L565.4 824.2 L575.7 807.1 L584.9 824.2 L595.2 807.0 L604.4 824.1 L614.7 806.9 L623.9 824.0 L634.2 806.8 L643.4 824.0 L653.7 806.7 L663.0 823.9 L673.2 806.6 L682.5 823.8 L692.7 806.5 L702.0 823.8 L712.2 806.4 L721.5 823.7 L731.7 806.3 L741.1 823.6 L751.2 806.2 L760.6 823.6 L770.7 806.1 L780.1 823.5 L790.3 806.0 L799.6 823.4 L809.8 806.0 L819.1 823.4 L829.3 805.9 L838.7 823.3 L848.8 805.8 L858.2 823.2 L868.3 805.7 L877.7 823.2 L887.8 805.6 L897.2 823.1 L907.3 805.5 L916.8 823.0 L926.8 805.4 L936.3 823.0 L946.3 805.3 L955.8 822.9 L965.8 805.2 L975.3 822.8 L985.3 805.1 L994.8 822.7 L1004.8 805.0 L1014.4 822.7 L1024.3 804.9 L1033.9 822.6 L1043.8 804.8 L1053.4 822.5 L1063.3 804.7 L1072.9 822.5 L1082.8 804.7 L1092.5 822.4 L1102.3 804.6 L1112.0 822.3 L1121.8 804.5 L1131.5 822.3 L1141.4 804.4 L1151.0 822.2 L1160.9 804.3 L1170.5 822.1 L1180.4 804.2 L1190.1 822.1 L1199.9 804.1 L1209.6 822.0 L1219.4 804.0 L1229.1 821.9 L1238.9 803.9 L1248.6 821.9 L1258.4 803.8 L1268.2 821.8 L1277.9 803.7 L1287.7 821.7 L1297.4 803.6 L1307.2 821.7 L1316.9 803.5 L1326.7 821.6 L1336.4 803.4 L1346.2 821.5 L1355.9 803.4 L1365.8 821.5 L1375.4 803.3 L1385.3 821.4 L1394.9 803.2 L1404.8 821.3 L1414.4 803.1 L1424.3 821.3 L1433.9 803.0 L1443.9 821.2 L1453.4 802.9 L1463.4 821.1 L1472.9 802.8 L1482.9 821.1 L1482.7 802.8 M388.9 841.7 L389.7 824.8 L398.7 841.7 L409.2 824.8 L418.2 841.7 L428.7 824.7 L437.8 841.6 L448.2 824.6 L457.3 841.6 L467.7 824.6 L476.8 841.5 L487.3 824.5 L496.4 841.5 L506.8 824.4 L515.9 841.5 L526.3 824.4 L535.5 841.4 L545.8 824.3 L555.0 841.4 L565.4 824.2 L574.5 841.3 L584.9 824.2 L594.1 841.3 L604.4 824.1 L613.6 841.2 L623.9 824.0 L633.2 841.2 L643.4 824.0 L652.7 841.2 L663.0 823.9 L672.2 841.1 L682.5 823.8 L691.8 841.1 L702.0 823.8 L711.3 841.0 L721.5 823.7 L730.9 841.0 L741.1 823.6 L750.4 841.0 L760.6 823.6 L769.9 840.9 L780.1 823.5 L789.5 840.9 L799.6 823.4 L809.0 840.8 L819.1 823.4 L828.5 840.8 L838.7 823.3 L848.1 840.7 L858.2 823.2 L867.6 840.7 L877.7 823.2 L887.2 840.7 L897.2 823.1 L906.7 840.6 L916.8 823.0 L926.2 840.6 L936.3 823.0 L945.8 840.5 L955.8 822.9 L965.3 840.5 L975.3 822.8 L984.9 840.4 L994.8 822.7 L1004.4 840.4 L1014.4 822.7 L1023.9 840.4 L1033.9 822.6 L1043.5 840.3 L1053.4 822.5 L1063.0 840.3 L1072.9 822.5 L1082.6 840.2 L1092.5 822.4 L1102.1 840.2 L1112.0 822.3 L1121.6 840.1 L1131.5 822.3 L1141.2 840.1 L1151.0 822.2 L1160.7 840.1 L1170.5 822.1 L1180.2 840.0 L1190.1 822.1 L1199.8 840.0 L1209.6 822.0 L1219.3 839.9 L1229.1 821.9 L1238.9 839.9 L1248.6 821.9 L1258.4 839.9 L1268.2 821.8 L1277.9 839.8 L1287.7 821.7 L1297.5 839.8 L1307.2 821.7 L1317.0 839.7 L1326.7 821.6 L1336.6 839.7 L1346.2 821.5 L1356.1 839.6 L1365.8 821.5 L1375.6 839.6 L1385.3 821.4 L1395.2 839.6 L1404.8 821.3 L1414.7 839.5 L1424.3 821.3 L1434.3 839.5 L1443.9 821.2 L1453.8 839.4 L1463.4 821.1 L1473.3 839.4 L1482.9 821.1 L1483.1 839.4 M388.9 841.7 L388.2 858.6 L398.7 841.7 L407.7 858.6 L418.2 841.7 L427.3 858.6 L437.8 841.6 L446.9 858.6 L457.3 841.6 L466.4 858.6 L476.8 841.5 L486.0 858.5 L496.4 841.5 L505.5 858.5 L515.9 841.5 L525.1 858.5 L535.5 841.4 L544.6 858.5 L555.0 841.4 L564.2 858.5 L574.5 841.3 L583.7 858.5 L594.1 841.3 L603.3 858.4 L613.6 841.2 L622.9 858.4 L633.2 841.2 L642.4 858.4 L652.7 841.2 L662.0 858.4 L672.2 841.1 L681.5 858.4 L691.8 841.1 L701.1 858.4 L711.3 841.0 L720.6 858.3 L730.9 841.0 L740.2 858.3 L750.4 841.0 L759.7 858.3 L769.9 840.9 L779.3 858.3 L789.5 840.9 L798.9 858.3 L809.0 840.8 L818.4 858.3 L828.5 840.8 L838.0 858.2 L848.1 840.7 L857.5 858.2 L867.6 840.7 L877.1 858.2 L887.2 840.7 L896.6 858.2 L906.7 840.6 L916.2 858.2 L926.2 840.6 L935.7 858.1 L945.8 840.5 L955.3 858.1 L965.3 840.5 L974.9 858.1 L984.9 840.4 L994.4 858.1 L1004.4 840.4 L1014.0 858.1 L1023.9 840.4 L1033.5 858.1 L1043.5 840.3 L1053.1 858.0 L1063.0 840.3 L1072.6 858.0 L1082.6 840.2 L1092.2 858.0 L1102.1 840.2 L1111.7 858.0 L1121.6 840.1 L1131.3 858.0 L1141.2 840.1 L1150.9 858.0 L1160.7 840.1 L1170.4 857.9 L1180.2 840.0 L1190.0 857.9 L1199.8 840.0 L1209.5 857.9 L1219.3 839.9 L1229.1 857.9 L1238.9 839.9 L1248.6 857.9 L1258.4 839.9 L1268.2 857.9 L1277.9 839.8 L1287.7 857.8 L1297.5 839.8 L1307.3 857.8 L1317.0 839.7 L1326.9 857.8 L1336.6 839.7 L1346.4 857.8 L1356.1 839.6 L1366.0 857.8 L1375.6 839.6 L1385.5 857.8 L1395.2 839.6 L1405.1 857.7 L1414.7 839.5 L1424.6 857.7 L1434.3 839.5 L1444.2 857.7 L1453.8 839.4 L1463.7 857.7 L1473.3 839.4 L1483.3 857.7 L1483.1 839.4 M387.5 875.5 L388.2 858.6 L397.2 875.5 L407.7 858.6 L416.8 875.5 L427.3 858.6 L436.4 875.5 L446.9 858.6 L456.0 875.5 L466.4 858.6 L475.5 875.6 L486.0 858.5 L495.1 875.6 L505.5 858.5 L514.7 875.6 L525.1 858.5 L534.3 875.6 L544.6 858.5 L553.8 875.6 L564.2 858.5 L573.4 875.6 L583.7 858.5 L593.0 875.6 L603.3 858.4 L612.5 875.6 L622.9 858.4 L632.1 875.6 L642.4 858.4 L651.7 875.6 L662.0 858.4 L671.3 875.6 L681.5 858.4 L690.8 875.6 L701.1 858.4 L710.4 875.7 L720.6 858.3 L730.0 875.7 L740.2 858.3 L749.5 875.7 L759.7 858.3 L769.1 875.7 L779.3 858.3 L788.7 875.7 L798.9 858.3 L808.3 875.7 L818.4 858.3 L827.8 875.7 L838.0 858.2 L847.4 875.7 L857.5 858.2 L867.0 875.7 L877.1 858.2 L886.6 875.7 L896.6 858.2 L906.1 875.7 L916.2 858.2 L925.7 875.7 L935.7 858.1 L945.3 875.8 L955.3 858.1 L964.8 875.8 L974.9 858.1 L984.4 875.8 L994.4 858.1 L1004.0 875.8 L1014.0 858.1 L1023.6 875.8 L1033.5 858.1 L1043.1 875.8 L1053.1 858.0 L1062.7 875.8 L1072.6 858.0 L1082.3 875.8 L1092.2 858.0 L1101.8 875.8 L1111.7 858.0 L1121.4 875.8 L1131.3 858.0 L1141.0 875.8 L1150.9 858.0 L1160.6 875.8 L1170.4 857.9 L1180.1 875.9 L1190.0 857.9 L1199.7 875.9 L1209.5 857.9 L1219.3 875.9 L1229.1 857.9 L1238.8 875.9 L1248.6 857.9 L1258.4 875.9 L1268.2 857.9 L1278.0 875.9 L1287.7 857.8 L1297.6 875.9 L1307.3 857.8 L1317.1 875.9 L1326.9 857.8 L1336.7 875.9 L1346.4 857.8 L1356.3 875.9 L1366.0 857.8 L1375.9 875.9 L1385.5 857.8 L1395.4 875.9 L1405.1 857.7 L1415.0 876.0 L1424.6 857.7 L1434.6 876.0 L1444.2 857.7 L1454.1 876.0 L1463.7 857.7 L1473.7 876.0 L1483.3 857.7 L1483.5 876.0 M387.5 875.5 L386.7 892.4 L397.2 875.5 L406.3 892.4 L416.8 875.5 L425.9 892.5 L436.4 875.5 L445.5 892.5 L456.0 875.5 L465.1 892.5 L475.5 875.6 L484.7 892.6 L495.1 875.6 L504.3 892.6 L514.7 875.6 L523.9 892.6 L534.3 875.6 L543.4 892.7 L553.8 875.6 L563.0 892.7 L573.4 875.6 L582.6 892.7 L593.0 875.6 L602.2 892.8 L612.5 875.6 L621.8 892.8 L632.1 875.6 L641.4 892.8 L651.7 875.6 L661.0 892.9 L671.3 875.6 L680.6 892.9 L690.8 875.6 L700.2 892.9 L710.4 875.7 L719.7 893.0 L730.0 875.7 L739.3 893.0 L749.5 875.7 L758.9 893.0 L769.1 875.7 L778.5 893.1 L788.7 875.7 L798.1 893.1 L808.3 875.7 L817.7 893.1 L827.8 875.7 L837.3 893.2 L847.4 875.7 L856.9 893.2 L867.0 875.7 L876.4 893.2 L886.6 875.7 L896.0 893.3 L906.1 875.7 L915.6 893.3 L925.7 875.7 L935.2 893.3 L945.3 875.8 L954.8 893.4 L964.8 875.8 L974.4 893.4 L984.4 875.8 L994.0 893.5 L1004.0 875.8 L1013.6 893.5 L1023.6 875.8 L1033.2 893.5 L1043.1 875.8 L1052.7 893.6 L1062.7 875.8 L1072.3 893.6 L1082.3 875.8 L1091.9 893.6 L1101.8 875.8 L1111.5 893.7 L1121.4 875.8 L1131.1 893.7 L1141.0 875.8 L1150.7 893.7 L1160.6 875.8 L1170.3 893.8 L1180.1 875.9 L1189.9 893.8 L1199.7 875.9 L1209.5 893.8 L1219.3 875.9 L1229.0 893.9 L1238.8 875.9 L1248.6 893.9 L1258.4 875.9 L1268.2 893.9 L1278.0 875.9 L1287.8 894.0 L1297.6 875.9 L1307.4 894.0 L1317.1 875.9 L1327.0 894.0 L1336.7 875.9 L1346.6 894.1 L1356.3 875.9 L1366.2 894.1 L1375.9 875.9 L1385.8 894.1 L1395.4 875.9 L1405.3 894.2 L1415.0 876.0 L1424.9 894.2 L1434.6 876.0 L1444.5 894.2 L1454.1 876.0 L1464.1 894.3 L1473.7 876.0 L1483.7 894.3 L1483.5 876.0 M386.0 909.3 L386.7 892.4 L395.8 909.3 L406.3 892.4 L415.4 909.4 L425.9 892.5 L435.0 909.4 L445.5 892.5 L454.6 909.5 L465.1 892.5 L474.2 909.6 L484.7 892.6 L493.8 909.6 L504.3 892.6 L513.4 909.7 L523.9 892.6 L533.0 909.7 L543.4 892.7 L552.6 909.8 L563.0 892.7 L572.3 909.9 L582.6 892.7 L591.9 909.9 L602.2 892.8 L611.5 910.0 L621.8 892.8 L631.1 910.0 L641.4 892.8 L650.7 910.1 L661.0 892.9 L670.3 910.2 L680.6 892.9 L689.9 910.2 L700.2 892.9 L709.5 910.3 L719.7 893.0 L729.1 910.3 L739.3 893.0 L748.7 910.4 L758.9 893.0 L768.3 910.4 L778.5 893.1 L787.9 910.5 L798.1 893.1 L807.5 910.6 L817.7 893.1 L827.1 910.6 L837.3 893.2 L846.7 910.7 L856.9 893.2 L866.3 910.7 L876.4 893.2 L885.9 910.8 L896.0 893.3 L905.5 910.9 L915.6 893.3 L925.1 910.9 L935.2 893.3 L944.8 911.0 L954.8 893.4 L964.4 911.0 L974.4 893.4 L984.0 911.1 L994.0 893.5 L1003.6 911.2 L1013.6 893.5 L1023.2 911.2 L1033.2 893.5 L1042.8 911.3 L1052.7 893.6 L1062.4 911.3 L1072.3 893.6 L1082.0 911.4 L1091.9 893.6 L1101.6 911.5 L1111.5 893.7 L1121.2 911.5 L1131.1 893.7 L1140.8 911.6 L1150.7 893.7 L1160.4 911.6 L1170.3 893.8 L1180.0 911.7 L1189.9 893.8 L1199.6 911.7 L1209.5 893.8 L1219.2 911.8 L1229.0 893.9 L1238.8 911.9 L1248.6 893.9 L1258.4 911.9 L1268.2 893.9 L1278.0 912.0 L1287.8 894.0 L1297.6 912.0 L1307.4 894.0 L1317.3 912.1 L1327.0 894.0 L1336.9 912.2 L1346.6 894.1 L1356.5 912.2 L1366.2 894.1 L1376.1 912.3 L1385.8 894.1 L1395.7 912.3 L1405.3 894.2 L1415.3 912.4 L1424.9 894.2 L1434.9 912.5 L1444.5 894.2 L1454.5 912.5 L1464.1 894.3 L1474.1 912.6 L1483.7 894.3 L1483.9 912.6" fill="none" stroke="#dadada" stroke-width="1.3"/>
<g fill="#dedede"><circle cx="395.5" cy="689.7" r="2.4"/><circle cx="386.0" cy="909.3" r="2.4"/><circle cx="414.9" cy="689.4" r="2.4"/><circle cx="405.6" cy="909.4" r="2.4"/><circle cx="434.3" cy="689.2" r="2.4"/><circle cx="425.2" cy="909.4" r="2.4"/><circle cx="453.7" cy="688.9" r="2.4"/><circle cx="444.8" cy="909.5" r="2.4"/><circle cx="473.1" cy="688.6" r="2.4"/><circle cx="464.4" cy="909.5" r="2.4"/><circle cx="492.4" cy="688.4" r="2.4"/><circle cx="484.0" cy="909.6" r="2.4"/><circle cx="511.8" cy="688.1" r="2.4"/><circle cx="503.6" cy="909.7" r="2.4"/><circle cx="531.2" cy="687.8" r="2.4"/><circle cx="523.2" cy="909.7" r="2.4"/><circle cx="550.6" cy="687.5" r="2.4"/><circle cx="542.8" cy="909.8" r="2.4"/><circle cx="570.0" cy="687.3" r="2.4"/><circle cx="562.4" cy="909.8" r="2.4"/><circle cx="589.4" cy="687.0" r="2.4"/><circle cx="582.1" cy="909.9" r="2.4"/><circle cx="608.8" cy="686.7" r="2.4"/><circle cx="601.7" cy="909.9" r="2.4"/><circle cx="628.2" cy="686.5" r="2.4"/><circle cx="621.3" cy="910.0" r="2.4"/><circle cx="647.6" cy="686.2" r="2.4"/><circle cx="640.9" cy="910.1" r="2.4"/><circle cx="667.0" cy="685.9" r="2.4"/><circle cx="660.5" cy="910.1" r="2.4"/><circle cx="686.3" cy="685.7" r="2.4"/><circle cx="680.1" cy="910.2" r="2.4"/><circle cx="705.7" cy="685.4" r="2.4"/><circle cx="699.7" cy="910.2" r="2.4"/><circle cx="725.1" cy="685.1" r="2.4"/><circle cx="719.3" cy="910.3" r="2.4"/><circle cx="744.5" cy="684.8" r="2.4"/><circle cx="738.9" cy="910.4" r="2.4"/><circle cx="763.9" cy="684.6" r="2.4"/><circle cx="758.5" cy="910.4" r="2.4"/><circle cx="783.3" cy="684.3" r="2.4"/><circle cx="778.1" cy="910.5" r="2.4"/><circle cx="802.7" cy="684.0" r="2.4"/><circle cx="797.7" cy="910.5" r="2.4"/><circle cx="822.1" cy="683.8" r="2.4"/><circle cx="817.3" cy="910.6" r="2.4"/><circle cx="841.5" cy="683.5" r="2.4"/><circle cx="836.9" cy="910.7" r="2.4"/><circle cx="860.8" cy="683.2" r="2.4"/><circle cx="856.5" cy="910.7" r="2.4"/><circle cx="880.2" cy="683.0" r="2.4"/><circle cx="876.1" cy="910.8" r="2.4"/><circle cx="899.6" cy="682.7" r="2.4"/><circle cx="895.7" cy="910.8" r="2.4"/><circle cx="919.0" cy="682.4" r="2.4"/><circle cx="915.3" cy="910.9" r="2.4"/><circle cx="938.4" cy="682.2" r="2.4"/><circle cx="935.0" cy="911.0" r="2.4"/><circle cx="957.8" cy="681.9" r="2.4"/><circle cx="954.6" cy="911.0" r="2.4"/><circle cx="977.2" cy="681.6" r="2.4"/><circle cx="974.2" cy="911.1" r="2.4"/><circle cx="996.6" cy="681.3" r="2.4"/><circle cx="993.8" cy="911.1" r="2.4"/><circle cx="1016.0" cy="681.1" r="2.4"/><circle cx="1013.4" cy="911.2" r="2.4"/><circle cx="1035.3" cy="680.8" r="2.4"/><circle cx="1033.0" cy="911.2" r="2.4"/><circle cx="1054.7" cy="680.5" r="2.4"/><circle cx="1052.6" cy="911.3" r="2.4"/><circle cx="1074.1" cy="680.3" r="2.4"/><circle cx="1072.2" cy="911.4" r="2.4"/><circle cx="1093.5" cy="680.0" r="2.4"/><circle cx="1091.8" cy="911.4" r="2.4"/><circle cx="1112.9" cy="679.7" r="2.4"/><circle cx="1111.4" cy="911.5" r="2.4"/><circle cx="1132.3" cy="679.5" r="2.4"/><circle cx="1131.0" cy="911.5" r="2.4"/><circle cx="1151.7" cy="679.2" r="2.4"/><circle cx="1150.6" cy="911.6" r="2.4"/><circle cx="1171.1" cy="678.9" r="2.4"/><circle cx="1170.2" cy="911.7" r="2.4"/><circle cx="1190.5" cy="678.6" r="2.4"/><circle cx="1189.8" cy="911.7" r="2.4"/><circle cx="1209.8" cy="678.4" r="2.4"/><circle cx="1209.4" cy="911.8" r="2.4"/><circle cx="1229.2" cy="678.1" r="2.4"/><circle cx="1229.0" cy="911.8" r="2.4"/><circle cx="1248.6" cy="677.8" r="2.4"/><circle cx="1248.6" cy="911.9" r="2.4"/><circle cx="1268.0" cy="677.6" r="2.4"/><circle cx="1268.2" cy="912.0" r="2.4"/><circle cx="1287.4" cy="677.3" r="2.4"/><circle cx="1287.8" cy="912.0" r="2.4"/><circle cx="1306.8" cy="677.0" r="2.4"/><circle cx="1307.5" cy="912.1" r="2.4"/><circle cx="1326.2" cy="676.8" r="2.4"/><circle cx="1327.1" cy="912.1" r="2.4"/><circle cx="1345.6" cy="676.5" r="2.4"/><circle cx="1346.7" cy="912.2" r="2.4"/><circle cx="1365.0" cy="676.2" r="2.4"/><circle cx="1366.3" cy="912.2" r="2.4"/><circle cx="1384.4" cy="675.9" r="2.4"/><circle cx="1385.9" cy="912.3" r="2.4"/><circle cx="1403.7" cy="675.7" r="2.4"/><circle cx="1405.5" cy="912.4" r="2.4"/><circle cx="1423.1" cy="675.4" r="2.4"/><circle cx="1425.1" cy="912.4" r="2.4"/><circle cx="1442.5" cy="675.1" r="2.4"/><circle cx="1444.7" cy="912.5" r="2.4"/><circle cx="1461.9" cy="674.9" r="2.4"/><circle cx="1464.3" cy="912.5" r="2.4"/><circle cx="1481.3" cy="674.6" r="2.4"/><circle cx="1483.9" cy="912.6" r="2.4"/><circle cx="394.8" cy="706.6" r="2.4"/><circle cx="1481.5" cy="692.9" r="2.4"/><circle cx="394.0" cy="723.5" r="2.4"/><circle cx="1481.7" cy="711.2" r="2.4"/><circle cx="393.3" cy="740.4" r="2.4"/><circle cx="1481.9" cy="729.5" r="2.4"/><circle cx="392.6" cy="757.3" r="2.4"/><circle cx="1482.1" cy="747.8" r="2.4"/><circle cx="391.8" cy="774.2" r="2.4"/><circle cx="1482.3" cy="766.1" r="2.4"/><circle cx="391.1" cy="791.1" r="2.4"/><circle cx="1482.5" cy="784.4" r="2.4"/><circle cx="390.4" cy="807.9" r="2.4"/><circle cx="1482.7" cy="802.8" r="2.4"/><circle cx="389.7" cy="824.8" r="2.4"/><circle cx="1482.9" cy="821.1" r="2.4"/><circle cx="388.9" cy="841.7" r="2.4"/><circle cx="1483.1" cy="839.4" r="2.4"/><circle cx="388.2" cy="858.6" r="2.4"/><circle cx="1483.3" cy="857.7" r="2.4"/><circle cx="387.5" cy="875.5" r="2.4"/><circle cx="1483.5" cy="876.0" r="2.4"/><circle cx="386.7" cy="892.4" r="2.4"/><circle cx="1483.7" cy="894.3" r="2.4"/></g>
<path d="M395.5 689.7 L1481.3 674.6 L1483.9 912.6 L386.0 909.3 Z" fill="none" stroke="#111" stroke-width="1.8" stroke-linejoin="miter"/>
<path d="M381.9 307.4 L763.6 289.0 L766.4 353.5 L385.1 372.2 Z" fill="#fff3c1"/>
<path d="M819.8 299.7 L954.4 357.9 L929.9 415.7 L794.5 357.9 Z" fill="#fff3c1"/>
<path d="M953.6 429.1 L1015.4 410.5 L1071.6 595.8 L1009.8 614.4 Z" fill="#fff3c1"/>
<path d="M381.9 307.4 L385.1 372.2 M528.8 300.3 L532.0 365.0 M614.3 296.2 L617.2 360.8 M685.2 292.8 L688.0 357.3 M763.6 289.0 L766.4 353.5 M819.8 299.7 L794.5 357.9 M887.1 328.6 L861.4 387.2 M954.4 357.9 L929.9 415.7 M953.6 429.1 L1015.4 410.5 M970.6 485.8 L1032.8 467.9 M990.4 548.3 L1051.8 530.1 M1009.8 614.4 L1071.6 595.8" fill="none" stroke="#ffd83a" stroke-width="1.6"/>
<circle cx="364.0" cy="340.7" r="3.8" fill="#1e1e8c"/>
<circle cx="786.7" cy="320.2" r="3.8" fill="#1e1e8c"/>
<circle cx="979.4" cy="403.0" r="3.8" fill="#1e1e8c"/>
<circle cx="1046.7" cy="626.4" r="3.8" fill="#1e1e8c"/>
<path d="M364.0 340.7 L786.7 320.2 L979.4 403.0 L1046.7 626.4" fill="none" stroke="#35c435" stroke-width="1.5"/>
<path d="M584.8 330.0 L571.1 335.5 L570.6 325.9 Z" fill="#35c435"/>
<path d="M891.8 365.4 L877.0 364.2 L880.8 355.4 Z" fill="#35c435"/>
<path d="M1015.8 523.8 L1007.2 511.8 L1016.3 509.0 Z" fill="#35c435"/>
<path d="M1040.8 605.6 L1010.8 680.8 M1040.8 605.6 L1124.6 676" fill="none" stroke="#ff8a1f" stroke-width="1.4" stroke-dasharray="6 5"/>
<path d="M1011 680.9 L1082 679.9" fill="none" stroke="#ff3000" stroke-width="2.2"/>
<rect x="1009.5" y="677.9" width="5" height="5" fill="#ff8418"/>
<rect x="1028.5" y="677.6" width="5" height="5" fill="#ff8418"/>
<rect x="1047.5" y="677.4" width="5" height="5" fill="#ff8418"/>
<rect x="1066.5" y="677.1" width="5" height="5" fill="#ff8418"/>
<use href="#i-node" x="356.0" y="345.7"/>
<use href="#i-node" x="778.8" y="325.1"/>
<use href="#i-node" x="971.2" y="408.2"/>
<use href="#i-node" x="1038.5" y="632.7"/>
<use href="#i-xs" x="375.8" y="344.9"/>
<use href="#i-xs" x="521.8" y="337.3"/>
<use href="#i-xs" x="608.1" y="333.4"/>
<use href="#i-xs" x="679.0" y="329.4"/>
<use href="#i-xs" x="756.6" y="326.2"/>
<use href="#i-xs" x="799.0" y="334.2"/>
<use href="#i-xs" x="865.5" y="362.7"/>
<use href="#i-xs" x="932.8" y="391.6"/>
<use href="#i-xs" x="977.1" y="424.8"/>
<use href="#i-xs" x="994.1" y="481.8"/>
<use href="#i-xs" x="1013.1" y="544.4"/>
<use href="#i-xs" x="1032.9" y="609.3"/>
<use href="#i-cl" x="568.2" y="335.4"/>
<use href="#i-cl" x="876.2" y="367.4"/>
<use href="#i-cl" x="1006.0" y="520.2"/>
<g transform="translate(1062,685.6)"><use href="#i-lat"/></g>
</svg>
<div id="right">
  <div class="abs" style="left:0;top:0;width:312px;height:24px;background:#f7f7f7;border-bottom:1px solid #e0e0e0"></div>
  <div class="t c" style="left:156px;top:5px">属性</div>
  <div class="abs" style="left:0;top:24px;width:312px;height:45px;background:#fff;border-bottom:1px solid #e0e0e0"></div>
  <div class="t c" style="left:147px;top:30px">线</div>
  <svg class="abs" style="left:160px;top:35px" width="9" height="6" viewBox="0 0 9 6"><path d="M0.6 0.8 L4.4 4.6 L8.2 0.8" fill="none" stroke="#444" stroke-width="1.1"/></svg>
  <div class="t c" style="left:156px;top:48px">(1)</div>
  <svg class="abs" style="left:21px;top:78px" width="9" height="5"><path d="M0 0 H8.4 L4.2 4.6 Z" fill="#444"/></svg>
  <div class="t" style="left:37px;top:74px">基础属性</div>
  <div class="t" style="left:27px;top:99px">名称</div>
  <div class="t" style="left:27px;top:126px">图形长度(m)</div>
  <div class="t" style="left:27px;top:153px">x坐标</div>
  <div class="t" style="left:27px;top:180px">y坐标</div>
  <div class="t" style="left:27px;top:207px">z坐标</div>
  <div class="abs" style="left:163px;top:93px;width:143px;height:136px;border:1px solid #a0a0a0;background:#fff">
    <div class="abs" style="left:0;top:26px;width:141px;height:28px;background:#f2f2f2;border-top:1px solid #a0a0a0;border-bottom:1px solid #a0a0a0"></div>
    <div class="abs" style="left:0;top:80px;width:141px;height:1px;background:#a0a0a0"></div>
    <div class="abs" style="left:0;top:107px;width:141px;height:27px;background:#f2f2f2;border-top:1px solid #a0a0a0"></div>
    <div class="t" style="left:8px;top:6px">LIN2</div>
    <div class="t" style="left:8px;top:33px;letter-spacing:.3px">59.65485703976901</div>
    <div class="abs" style="left:8px;top:60px;width:126px;height:16px;overflow:hidden"><div class="t" style="left:0;top:0;letter-spacing:.3px">-242.61772102843554</div></div>
    <div class="t" style="left:8px;top:87px;letter-spacing:.3px">271.5378745175765</div>
    <div class="t" style="left:8px;top:114px">0</div>
  </div>
  <div class="abs" style="left:6px;top:804px;width:300px;height:67px;border:1px solid #dcdcdc;background:#f7f7f7"></div>
  <div class="t" style="left:13px;top:813.5px">字段说明:x坐标</div>
  <div class="abs" style="left:0;top:878px;width:312px;height:25px;background:#e4e4e4"></div>
  <div class="abs" style="left:112px;top:878px;width:56px;height:25px;background:#f7f7f7"></div>
  <div class="t c" style="left:28px;top:884px">工具</div>
  <div class="t c" style="left:84px;top:884px">图例</div>
  <div class="t c" style="left:140px;top:884px">属性</div>
</div>
<div id="cbar">
  <div class="abs" style="left:241px;top:992px;width:1366px;height:1px;background:#dcdcdc"></div>
  <svg class="abs" style="left:1370px;top:993px" width="237" height="24" viewBox="1370 993 237 24">
    <g fill="none" stroke="#555" stroke-width="1.1">
      <path d="M1380.6 1003 V999.8 H1383.8 M1380.8 1000 L1384.4 1003.6 M1391.6 1003 V999.8 H1388.4 M1391.4 1000 L1387.8 1003.6 M1380.6 1007.4 V1010.6 H1383.8 M1380.8 1010.4 L1384.4 1006.8 M1391.6 1007.4 V1010.6 H1388.4 M1391.4 1010.4 L1387.8 1006.8"/>
      <path d="M1412.6 999.8 H1416.6 V1003.8 M1416.4 1000 L1412.6 1003.8 M1405.4 1006.6 V1010.6 H1409.4 M1405.6 1010.4 L1409.4 1006.6"/>
      <circle cx="1435.4" cy="1004.6" r="5"/><path d="M1439 1008.2 L1441.6 1010.8"/><circle cx="1435.4" cy="1004.6" r="2.4" stroke-width=".9"/><path d="M1435.4 1001.4 V1002.6 M1435.4 1006.6 V1007.8 M1432.2 1004.6 H1433.4 M1437.4 1004.6 H1438.6" stroke-width=".9"/>
      <path d="M1454.6 998.6 V1010.6 M1567.5 998.6 V1010.6" stroke="#999" stroke-width="1"/>
      <g transform="translate(1 0)"><path d="M1470.8 1005.6 V1001.4 Q1471.6 1000.4 1472.4 1001.4 V1004.4 V1000.4 Q1473.3 999.4 1474.2 1000.4 V1004.4 V1000.8 Q1475.1 999.8 1476 1000.8 V1004.6 V1002 Q1476.9 1001 1477.8 1002 V1007 Q1477.6 1010.6 1474.4 1010.6 Q1471.8 1010.6 1470.4 1008 L1468.8 1005.2 Q1469.4 1004 1470.8 1005.6 Z"/></g>
      <g transform="translate(.7 0)"><circle cx="1498" cy="1004.6" r="5"/><path d="M1501.6 1008.2 L1504.2 1010.8 M1495.4 1004.6 H1500.6 M1498 1002 V1007.2"/></g>
      <path d="M1518.3 1005 A5.6 5.6 0 0 1 1528.4 1001.6 M1529.5 1004.4 A5.6 5.6 0 0 1 1519.6 1008.6"/>
      <path d="M1581.4 1000.6 H1587 V1010.2 H1581.4 Z"/><path d="M1587 1000.6 H1592.6 V1010.2 H1587" stroke="#bbb"/>
    </g>
    <path d="M1516.2 1003.6 L1520.4 1004.2 L1517.8 1007.2 Z M1531.6 1004.8 L1527.4 1004.6 L1530 1001.4 Z" fill="#555"/>
    <text x="1549.2" y="1008.7" font-size="10" text-anchor="middle" fill="#6a6a6a" font-family="Liberation Sans, sans-serif">2D</text>
  </svg>
</div>
<div id="status"><div class="t" style="left:605.4px;top:5px;color:#fff">|</div><div class="t" style="left:616.8px;top:5px;color:#fff">指针坐标：</div><div class="t" style="left:677.0px;top:5px;color:#fff;letter-spacing:0.23px">(-208.1294,274.3030)</div><div class="t" style="left:808.9px;top:5px;color:#fff">|</div><div class="t" style="left:820.7px;top:5px;color:#fff">中心点：</div><div class="t" style="left:868.2px;top:5px;color:#fff;letter-spacing:0.27px">[-287.4894,331.1350]</div><div class="t" style="left:1000.1px;top:5px;color:#fff">|</div><div class="t" style="left:1011.5px;top:5px;color:#fff">缩放：</div><div class="t" style="left:1047.0px;top:5px;color:#fff;letter-spacing:0.19px">195.313%</div><div class="t" style="left:1114.9px;top:5px;color:#fff">|</div><div class="t" style="left:1126.3px;top:5px;color:#fff;letter-spacing:0.23px">1厘米 = 19.3512米</div><div class="t" style="left:1241.5px;top:5px;color:#fff">|</div><div class="t" style="left:1253.0px;top:5px;color:#fff">已选择 1</div><div class="t" style="left:1310.9px;top:5px;color:#fff">|</div></div>
<div class="menu" style="left:1080px;top:677px;width:178px;height:186px;border-radius:3px">
<div class="mi sel" style="top:7px;width:178px;height:24px"></div>
<div class="t" style="left:30px;top:11px;color:#fff;font-weight:500">设置为</div>
<svg class="abs" style="left:164px;top:13.0px" width="7" height="11" viewBox="0 0 7 11"><path d="M1 1 L5.6 5.5 L1 10" fill="none" stroke="#fff" stroke-width="1.2"/></svg>
<div class="abs" style="left:30px;top:36px;width:148px;height:1px;background:#e4e4e4"></div>
<div class="t" style="left:30px;top:46px">进入编辑状态</div>
<div class="t" style="left:30px;top:72px">反向</div>
<div class="t" style="left:30px;top:98px">删除</div>
<div class="t" style="left:30px;top:133px">取消选择</div>
<div class="t" style="left:30px;top:159px">选择反向</div>
<div class="abs" style="left:30px;top:123px;width:148px;height:1px;background:#e4e4e4"></div>
</div>
<div class="menu" style="left:1259px;top:677px;width:176px;height:170px;border-radius:3px">
<div class="mi sel" style="top:139px;width:176px;height:24px"></div>
<div class="t" style="left:30px;top:13.5px;color:#c0c4cc">线</div>
<div class="t" style="left:30px;top:39.5px;color:#444">一维水动力</div>
<svg class="abs" style="left:161px;top:41.5px" width="7" height="11" viewBox="0 0 7 11"><path d="M1 1 L5.6 5.5 L1 10" fill="none" stroke="#555" stroke-width="1.2"/></svg>
<div class="t" style="left:30px;top:65.5px;color:#444">二维水动力</div>
<svg class="abs" style="left:161px;top:67.5px" width="7" height="11" viewBox="0 0 7 11"><path d="M1 1 L5.6 5.5 L1 10" fill="none" stroke="#555" stroke-width="1.2"/></svg>
<div class="t" style="left:30px;top:91.5px;color:#444">水文图层</div>
<svg class="abs" style="left:161px;top:93.5px" width="7" height="11" viewBox="0 0 7 11"><path d="M1 1 L5.6 5.5 L1 10" fill="none" stroke="#555" stroke-width="1.2"/></svg>
<div class="t" style="left:30px;top:117.5px;color:#444">排水图层</div>
<svg class="abs" style="left:161px;top:119.5px" width="7" height="11" viewBox="0 0 7 11"><path d="M1 1 L5.6 5.5 L1 10" fill="none" stroke="#555" stroke-width="1.2"/></svg>
<div class="t" style="left:30px;top:143.5px;color:#fff;font-weight:500">耦合图层</div>
<svg class="abs" style="left:161px;top:145.5px" width="7" height="11" viewBox="0 0 7 11"><path d="M1 1 L5.6 5.5 L1 10" fill="none" stroke="#fff" stroke-width="1.2"/></svg>
</div>
<div class="menu" style="left:1436px;top:811px;width:202px;height:90px">
<div class="mi sel" style="top:7px;width:202px;height:24px"></div>
<div class="t" style="left:30px;top:11.5px;color:#fff;font-weight:500">一二维上下游耦合</div>
<div class="t" style="left:30px;top:37.5px;color:#444">一二维侧向耦合</div>
<div class="t" style="left:30px;top:63.5px;color:#444">二维排水侧向耦合</div>
</div>
</div>
</body>
</html>
